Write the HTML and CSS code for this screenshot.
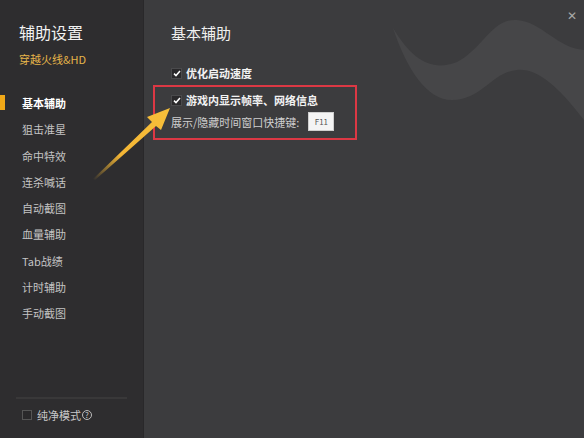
FILE: index.html
```html
<!DOCTYPE html>
<html lang="zh">
<head>
<meta charset="utf-8">
<link rel="stylesheet" href="styles.css">
</head>
<body>
<div class="window">
  <aside class="sidebar">
    <div class="side-title">辅助设置</div>
    <div class="side-game">穿越火线&amp;HD</div>
    <ul class="menu">
      <li class="active">基本辅助</li>
      <li>狙击准星</li>
      <li>命中特效</li>
      <li>连杀喊话</li>
      <li>自动截图</li>
      <li>血量辅助</li>
      <li>Tab战绩</li>
      <li>计时辅助</li>
      <li>手动截图</li>
    </ul>
    <div class="side-bottom">
      <div class="sep"></div>
      <label class="pure"><span class="box"></span>纯净模式<span class="help">?</span></label>
    </div>
  </aside>
  <main class="main">
    <svg class="wave" width="192" height="130" viewBox="0 0 192 130">
      <path d="M1 28 C20 60 40 72 65 62 C90 50 100 18 125 20 C150 22 165 48 192 50 L192 120 C165 85 145 68 125 70 C100 72 90 100 60 100 C35 100 15 70 1 28 Z" fill="#464648"/>
    </svg>
    <div class="close">✕</div>
    <h1 class="title">基本辅助</h1>
    <div class="option first"><span class="check"><svg width="8" height="7" viewBox="0 0 8 7"><path d="M1 3.6 L3 5.6 L7 1" stroke="#fff" stroke-width="1.5" fill="none"/></svg></span>优化启动速度</div>
    <div class="highlight">
      <div class="option"><span class="check"><svg width="8" height="7" viewBox="0 0 8 7"><path d="M1 3.6 L3 5.6 L7 1" stroke="#fff" stroke-width="1.5" fill="none"/></svg></span>游戏内显示帧率、网络信息</div>
      <div class="hotkey">展示/隐藏时间窗口快捷键:<span class="key">F11</span></div>
    </div>
  </main>
  <svg class="arrow" width="90" height="80" viewBox="0 0 90 80">
    <defs>
      <linearGradient id="ag" x1="0" y1="1" x2="1" y2="0">
        <stop offset="0" stop-color="#f5b932" stop-opacity="0"/>
        <stop offset="0.35" stop-color="#f3b535"/>
        <stop offset="1" stop-color="#f7c03a"/>
      </linearGradient>
    </defs>
    <path d="M3 77 L62 20 L57 15 L80 6 L71 28 L66 24 L5 78 Z" fill="url(#ag)"/>
  </svg>
</div>
</body>
</html>
```
FILE: styles.css
```css
* { box-sizing: border-box; margin: 0; padding: 0; }
html, body { width: 584px; height: 438px; overflow: hidden; }
body {
  font-family: "Noto Sans CJK SC", "Microsoft YaHei", sans-serif;
  background: #3c3c3e;
  color: #d8d8d8;
}
.window { position: relative; display: flex; width: 584px; height: 438px; }
.sidebar {
  width: 144px;
  background: #2e2d2f;
  border-right: 1px solid #29282a;
  display: flex;
  flex-direction: column;
  padding-top: 20px;
}
.side-title { font-size: 16px; color: #f2f2f2; padding-left: 19px; line-height: 24px; }
.side-game { font-size: 11px; color: #e6b54a; padding-left: 19px; margin-top: 7px; line-height: 16px; }
.menu { list-style: none; margin-top: 28px; }
.menu li {
  font-size: 11px;
  line-height: 16px;
  height: 26.3px;
  padding: 0 0 0 22px;
  color: #c4c4c4;
  position: relative;
}
.menu li.active { color: #fff; font-weight: bold; }
.menu li.active::before {
  content: "";
  position: absolute;
  left: 0; top: 0;
  width: 5px; height: 15px;
  background: #f0a818;
}
.side-bottom { margin-top: auto; padding: 0 16px 15px 16px; }
.sep { height: 2px; background: #393839; margin-bottom: 8px; }
.pure { display: flex; align-items: center; font-size: 11px; color: #c8c8c8; padding-left: 6px; line-height: 16px; }
.box { width: 10px; height: 10px; border: 1px solid #555; background: #2a292b; margin-right: 5px; }
.help {
  display: inline-flex; align-items: center; justify-content: center;
  width: 10px; height: 10px; border: 1px solid #bbb; border-radius: 50%;
  font-size: 8px; line-height: 8px; margin-left: 1px; color: #ccc;
}
.main { flex: 1; position: relative; padding: 22px 0 0 27px; }
.wave { position: absolute; right: 0; top: 0; }
.close { position: absolute; right: 7px; top: 6px; font-size: 12px; color: #a8a8a8; }
.title { position: relative; font-size: 15px; font-weight: normal; color: #f0f0f0; line-height: 22px; }
.option {
  position: relative;
  display: flex; align-items: center;
  font-size: 11px; font-weight: bold; color: #f2f2f2; line-height: 16px;
}
.option.first { margin-top: 21px; }
.check {
  width: 11px; height: 11px; background: #2a292b; border: 1px solid #4a4a4c;
  display: inline-flex; align-items: center; justify-content: center; margin-right: 4px;
}
.highlight {
  position: relative;
  margin: 4px 0 0 -18px;
  width: 204px;
  border: 2px solid #dc3844;
  padding: 5px 0 7px 16px;
}
.hotkey { display: flex; align-items: center; font-size: 11px; color: #cfcfcf; margin-top: 4px; line-height: 18px; }
.key {
  display: inline-block; margin-left: 9px; width: 26px; height: 19px;
  background: #f4f4f4; color: #555; font-size: 8px; text-align: center; line-height: 18px;
  border: 1px solid #cfcfcf;
}
.arrow { position: absolute; left: 90px; top: 102px; }
```
